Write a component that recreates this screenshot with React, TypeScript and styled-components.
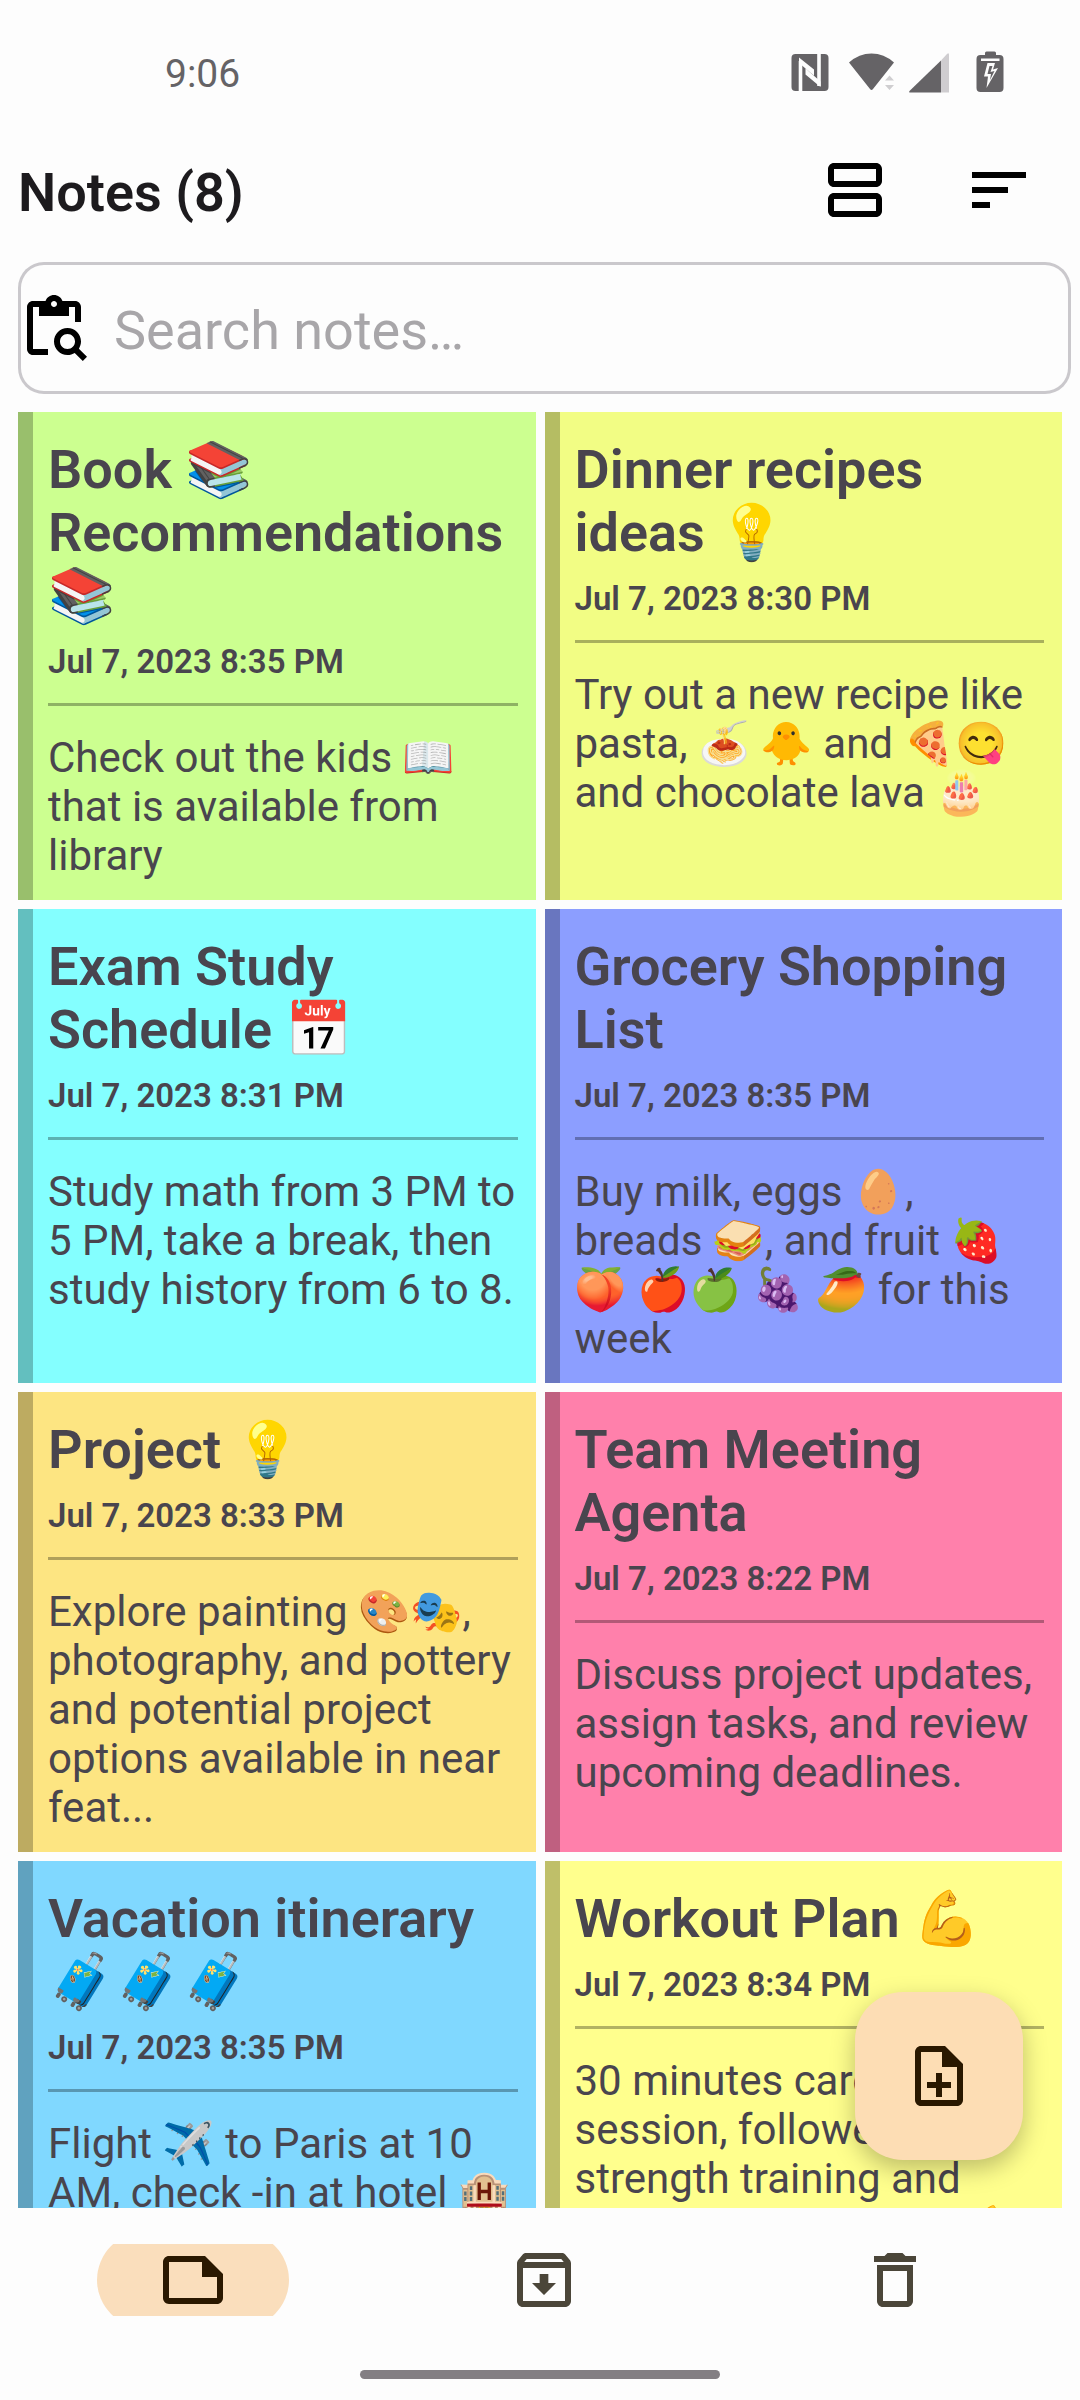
import React, { useState } from "react";
import styled, { createGlobalStyle } from "styled-components";

const GlobalStyle = createGlobalStyle`
  *, *::before, *::after { box-sizing: border-box; }
  body {
    margin: 0;
    background: #fdfdfd;
    color: #1d1b1e;
    font-family: Roboto, "Noto Color Emoji", sans-serif;
  }
`;

const Screen = styled.div`
  display: flex;
  flex-direction: column;
  height: 100vh;
`;

const StatusBar = styled.div`
  display: flex;
  align-items: center;
  justify-content: space-between;
  height: 144px;
  padding: 0 75px 0 165px;
  color: #656366;
`;

const Clock = styled.time`
  padding-top: 4px;
  font-size: 39px;
  line-height: 46px;
`;

const StatusIcons = styled.div`
  display: flex;
  align-items: center;
  gap: 14px;
`;

const StatusIcon = styled.svg`
  display: block;
  height: 42px;
  fill: currentColor;
`;

const TopBar = styled.header`
  display: flex;
  align-items: center;
  justify-content: space-between;
  height: 92px;
  padding: 0 45px 0 18px;
`;

const Heading = styled.h1`
  margin: 0;
  padding-top: 6px;
  font-size: 54px;
  line-height: 64px;
  font-weight: 600;
`;

const Actions = styled.div`
  display: flex;
  gap: 72px;
`;

const IconButton = styled.button`
  display: flex;
  padding: 0;
  border: 0;
  background: none;
  color: #000;
  cursor: pointer;
`;

const Glyph = styled.svg`
  display: block;
  flex: none;
  width: 72px;
  height: 72px;
  fill: currentColor;
`;

const SearchField = styled.label`
  display: flex;
  align-items: center;
  gap: 24px;
  height: 132px;
  margin: 26px 9px 18px 18px;
  border-radius: 26px;
  box-shadow: inset 0 0 0 3px #cac8cc;
  color: #000;
`;

const SearchInput = styled.input`
  flex: 1;
  min-width: 0;
  padding: 6px 0 0;
  border: 0;
  outline: 0;
  background: none;
  color: #1d1b1e;
  font: 400 54px/64px Roboto, sans-serif;

  &::placeholder {
    color: #a8a6a9;
    opacity: 1;
  }
`;

const Content = styled.main`
  position: relative;
  flex: 1;
  min-height: 0;
`;

const NoteGrid = styled.div`
  display: grid;
  grid-template-columns: repeat(2, minmax(0, 1fr));
  align-content: start;
  gap: 9px;
  height: 100%;
  padding: 0 18px;
  overflow-y: auto;
  scrollbar-width: none;
`;

const NoteCard = styled.article<{ $color: string }>`
  padding: 26px 18px 20px 15px;
  border-left: 15px solid rgba(0, 0, 0, 0.25);
  background: ${(p) => p.$color};
  color: #49454e;
`;

const NoteTitle = styled.h2`
  margin: 0;
  font-size: 54px;
  line-height: 63px;
  font-weight: 600;
`;

const NoteDate = styled.time`
  display: block;
  margin-top: 15px;
  font-size: 33px;
  line-height: 39px;
  font-weight: 600;
`;

const Divider = styled.hr`
  height: 3px;
  margin: 22px 0 27px;
  border: 0;
  background: rgba(0, 0, 0, 0.3);
`;

const NoteBody = styled.p`
  margin: 0;
  font-size: 42px;
  line-height: 49px;
`;

const AddButton = styled.button`
  position: absolute;
  right: 57px;
  bottom: 48px;
  display: flex;
  align-items: center;
  justify-content: center;
  width: 168px;
  height: 168px;
  padding: 0;
  border: 0;
  border-radius: 48px;
  background: #fdddb4;
  color: #2a1800;
  box-shadow: 0 9px 24px rgba(0, 0, 0, 0.26);
  cursor: pointer;
`;

const BottomNav = styled.nav`
  display: grid;
  grid-template-columns: repeat(3, 1fr);
  padding: 36px 10px 54px 18px;
`;

const NavButton = styled.button`
  display: flex;
  justify-content: center;
  padding: 0;
  border: 0;
  background: none;
  color: #4b4639;
  cursor: pointer;

  &[aria-current="page"] {
    color: #2a1800;
  }
`;

const NavIcon = styled.span<{ $active: boolean }>`
  display: flex;
  align-items: center;
  justify-content: center;
  width: 192px;
  height: 72px;
  overflow: hidden;

  &::before {
    content: "";
    flex: none;
    width: 192px;
    height: 96px;
    margin-right: -192px;
    border-radius: 48px;
    background: ${(p) => (p.$active ? "#fadebc" : "transparent")};
  }

  svg {
    position: relative;
    margin: 0 60px;
  }
`;

const HomeIndicator = styled.div`
  width: 360px;
  height: 9px;
  margin: 0 auto 21px;
  border-radius: 5px;
  background: #837f83;
`;

const icons = {
  agenda:
    "M19 3H5c-1.1 0-2 .9-2 2v4c0 1.1.9 2 2 2h14c1.1 0 2-.9 2-2V5c0-1.1-.9-2-2-2zm0 6H5V5h14v4zm0 4H5c-1.1 0-2 .9-2 2v4c0 1.1.9 2 2 2h14c1.1 0 2-.9 2-2v-4c0-1.1-.9-2-2-2zm0 6H5v-4h14v4z",
  sort: "M3 18h6v-2H3v2zM3 6v2h18V6H3zm0 7h12v-2H3v2z",
  search:
    "M5 5h2v3h10V5h2v5h2V5c0-1.1-.9-2-2-2h-4.18C14.4 1.84 13.3 1 12 1s-2.4.84-2.82 2H5c-1.1 0-2 .9-2 2v14c0 1.1.9 2 2 2h5v-2H5V5zm7-2c.55 0 1 .45 1 1s-.45 1-1 1-1-.45-1-1 .45-1 1-1zM20.3 18.9c.4-.7.7-1.5.7-2.4 0-2.5-2-4.5-4.5-4.5S12 14 12 16.5s2 4.5 4.5 4.5c.9 0 1.7-.3 2.4-.7l2.7 2.7 1.4-1.4-2.7-2.7zm-3.8.1c-1.4 0-2.5-1.1-2.5-2.5s1.1-2.5 2.5-2.5 2.5 1.1 2.5 2.5-1.1 2.5-2.5 2.5z",
  noteAdd:
    "M13 11h-2v3H8v2h3v3h2v-3h3v-2h-3v-3zm1-9H6c-1.1 0-2 .9-2 2v16c0 1.1.89 2 1.99 2H18c1.1 0 2-.9 2-2V8l-6-6zm4 18H6V4h7v5h5v11z",
  note: "M16 4H4c-1.1 0-2 .9-2 2v12.01c0 1.1.9 1.99 2 1.99h16c1.1 0 2-.9 2-2v-8l-6-6zM4 18.01V6h11v5h5v7.01H4z",
  archive:
    "M20.54 5.23l-1.39-1.68C18.88 3.21 18.47 3 18 3H6c-.47 0-.88.21-1.16.55L3.46 5.23C3.17 5.57 3 6.02 3 6.5V19c0 1.1.9 2 2 2h14c1.1 0 2-.9 2-2V6.5c0-.48-.17-.93-.46-1.27zM6.24 5h11.52l.83 1H5.42l.82-1zM5 19V8h14v11H5zm8.45-9h-2.9v3H8l4 4 4-4h-2.55z",
  trash:
    "M6 19c0 1.1.9 2 2 2h8c1.1 0 2-.9 2-2V7H6v12zM8 9h8v10H8V9zm7.5-5l-1-1h-5l-1 1H5v2h14V4h-3.5z",
};

type IconName = keyof typeof icons;

function Icon({ name }: { name: IconName }) {
  return (
    <Glyph viewBox="0 0 24 24" aria-hidden="true">
      <path d={icons[name]} />
    </Glyph>
  );
}

const notes = [
  {
    color: "#ccff90",
    title: "Book 📚 Recommendations 📚",
    date: "Jul 7, 2023 8:35 PM",
    body: "Check out the kids 📖 that is available from library",
  },
  {
    color: "#f2fd84",
    title: "Dinner recipes ideas 💡",
    date: "Jul 7, 2023 8:30 PM",
    body: "Try out a new recipe like pasta, 🍝 🐥 and 🍕😋 and chocolate lava 🎂",
  },
  {
    color: "#84ffff",
    title: "Exam Study Schedule 📅",
    date: "Jul 7, 2023 8:31 PM",
    body: "Study math from 3 PM to 5 PM, take a break, then study history from 6 to 8.",
  },
  {
    color: "#8c9eff",
    title: "Grocery Shopping List",
    date: "Jul 7, 2023 8:35 PM",
    body: "Buy milk, eggs 🥚, breads 🥪, and fruit 🍓 🍑 🍎🍏 🍇 🥭 for this week",
  },
  {
    color: "#fde582",
    title: "Project 💡",
    date: "Jul 7, 2023 8:33 PM",
    body: "Explore painting 🎨🎭, photography, and pottery and potential project options available in near feat...",
  },
  {
    color: "#ff80ab",
    title: "Team Meeting Agenta",
    date: "Jul 7, 2023 8:22 PM",
    body: "Discuss project updates, assign tasks, and review upcoming deadlines.",
  },
  {
    color: "#80d8ff",
    title: "Vacation itinerary 🧳🧳🧳",
    date: "Jul 7, 2023 8:35 PM",
    body: "Flight ✈️ to Paris at 10 AM, check -in at hotel 🏨",
  },
  {
    color: "#ffff8d",
    title: "Workout Plan 💪",
    date: "Jul 7, 2023 8:34 PM",
    body: "30 minutes cardio session, followed by strength training and stretching in the end 💪",
  },
];

const tabs: { icon: IconName; label: string }[] = [
  { icon: "note", label: "Notes" },
  { icon: "archive", label: "Archive" },
  { icon: "trash", label: "Trash" },
];

export default function App() {
  const [query, setQuery] = useState("");
  const [tab, setTab] = useState("Notes");
  const shown = notes.filter((n) =>
    (n.title + n.body).toLowerCase().includes(query.toLowerCase())
  );

  return (
    <Screen>
      <GlobalStyle />
      <StatusBar>
        <Clock>9:06</Clock>
        <StatusIcons>
          <StatusIcon width="44" viewBox="0 0 44 42" aria-hidden="true">
            <rect x="0.5" y="3" width="37" height="37" rx="4" />
            <path d="M9.500 42V10M28 1v34" fill="none" stroke="#fdfdfd" strokeWidth="3.600" />
            <path d="M8 6.500l15 12v6L8 12zM29.500 36L14.500 23.500v-6l15 13z" fill="#fdfdfd" />
          </StatusIcon>
          <StatusIcon width="46" viewBox="0 0 46 42" aria-hidden="true">
            <path d="M0 11.500Q10 2.500 22.500 2.500T45 11.500L24 38q-1.500 2-3 0z" />
            <path d="M40.500 24.500l4.500 5h-9zM36 34h9l-4.500 5z" fill="#cfced0" />
          </StatusIcon>
          <StatusIcon width="40" viewBox="0 0 40 42" aria-hidden="true">
            <path d="M32 9.500L38 3q2-2 2 1v37.500h-8z" fill="#cfcdd0" />
            <path d="M32 9.500V41.500H1.500Q-1 41.500 1 39.500z" />
          </StatusIcon>
          <StatusIcon width="42" viewBox="-6 0 42 42" aria-hidden="true">
            <path d="M16 4V2q0-1.500 1.500-1.500h8Q27 .5 27 2v2h3.500q4 0 4 4v29q0 4-4 4h-19q-4 0-4-4V8q0-4 4-4z" />
            <path d="M12 7.500h18.500v2.500H12z" fill="#fdfdfd" />
            <path d="M18.500 12H26l-2 6.500 5-1.500-11.500 20L19 25.500h-4zM20.500 15l-2 8h3.500l-1 6 4.500-9-4 1 2-6z" fill="#fdfdfd" fillRule="evenodd" />
          </StatusIcon>
        </StatusIcons>
      </StatusBar>

      <TopBar>
        <Heading>Notes (8)</Heading>
        <Actions>
          <IconButton aria-label="Change layout">
            <Icon name="agenda" />
          </IconButton>
          <IconButton aria-label="Sort notes">
            <Icon name="sort" />
          </IconButton>
        </Actions>
      </TopBar>

      <SearchField>
        <Icon name="search" />
        <SearchInput
          type="text"
          aria-label="Search notes"
          placeholder="Search notes…"
          value={query}
          onChange={(e) => setQuery(e.target.value)}
        />
      </SearchField>

      <Content>
        <NoteGrid>
          {shown.map((n) => (
            <NoteCard key={n.title} $color={n.color}>
              <NoteTitle>{n.title}</NoteTitle>
              <NoteDate>{n.date}</NoteDate>
              <Divider />
              <NoteBody>{n.body}</NoteBody>
            </NoteCard>
          ))}
        </NoteGrid>
        <AddButton aria-label="Add note">
          <Icon name="noteAdd" />
        </AddButton>
      </Content>

      <BottomNav>
        {tabs.map((t) => (
          <NavButton
            key={t.label}
            aria-label={t.label}
            aria-current={tab === t.label ? "page" : undefined}
            onClick={() => setTab(t.label)}
          >
            <NavIcon $active={tab === t.label}>
              <Icon name={t.icon} />
            </NavIcon>
          </NavButton>
        ))}
      </BottomNav>
      <HomeIndicator />
    </Screen>
  );
}
